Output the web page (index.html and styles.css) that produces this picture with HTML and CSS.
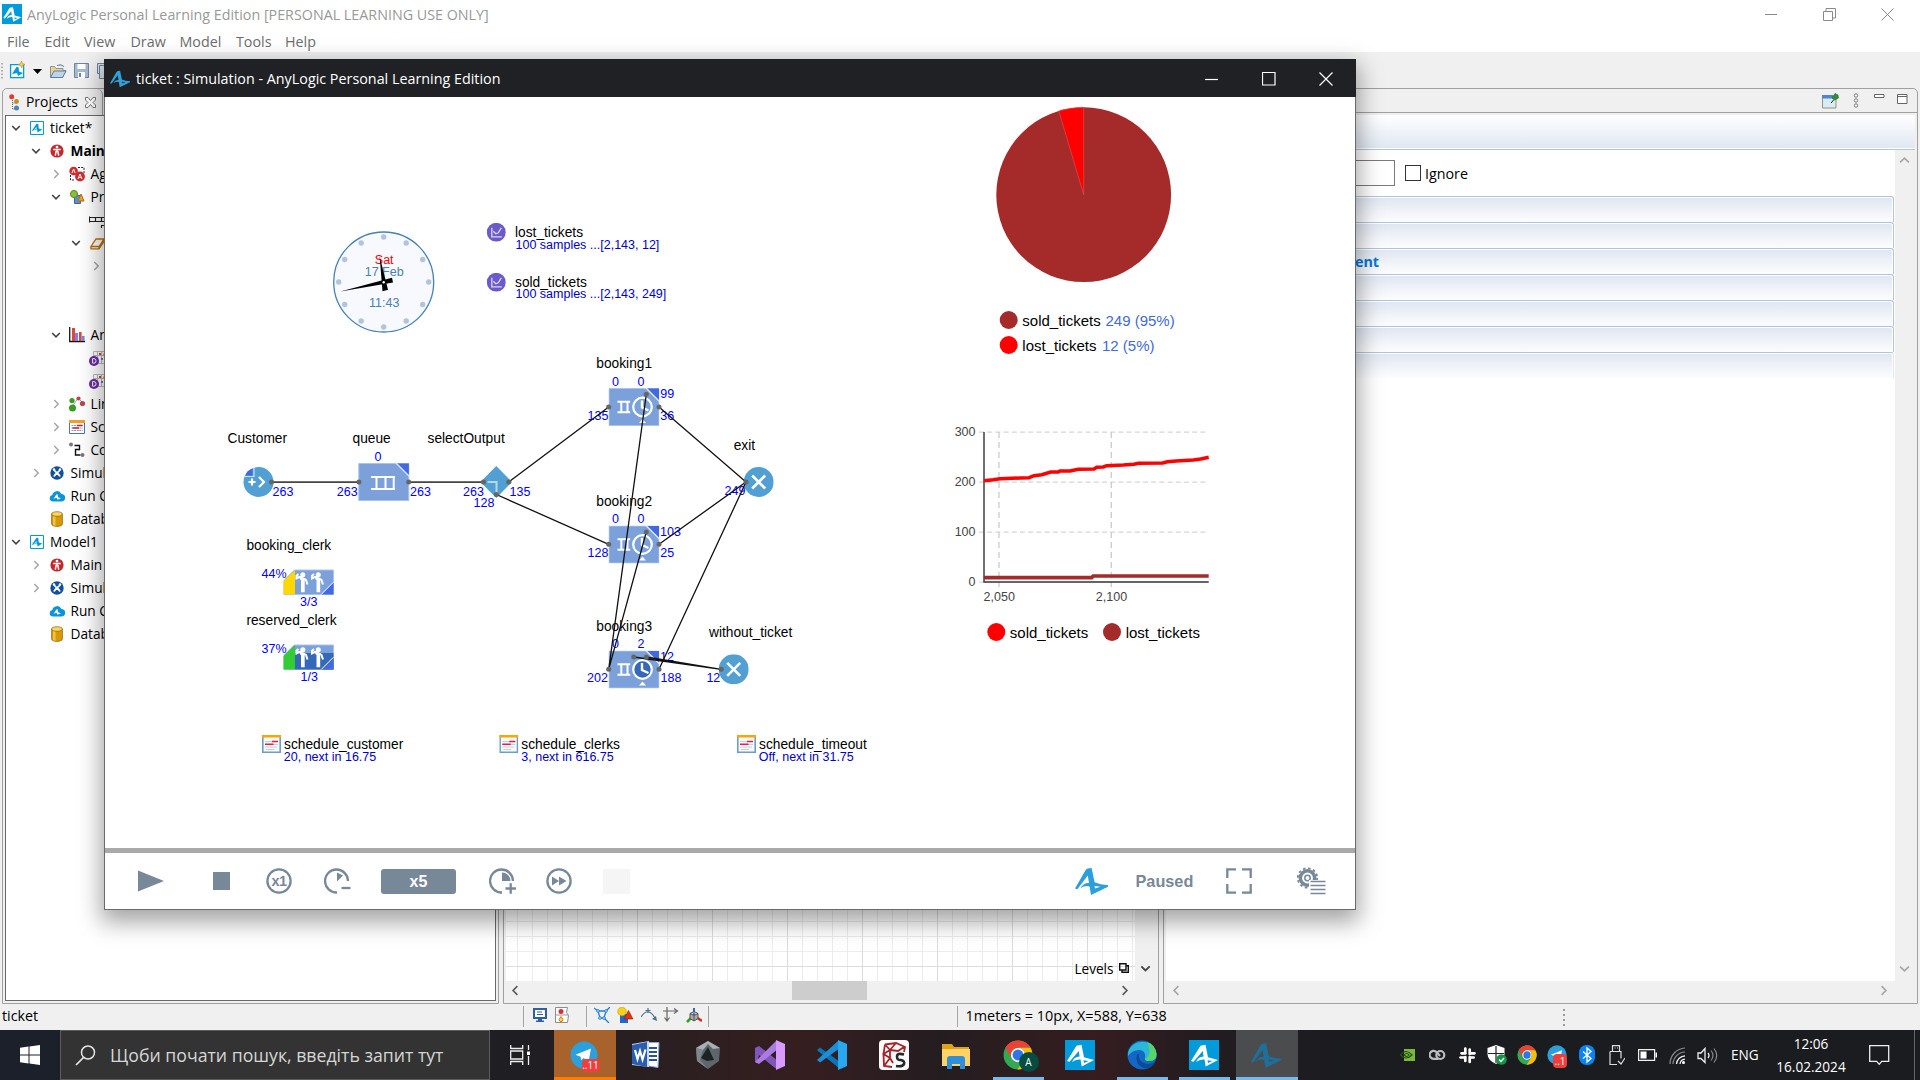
FILE: index.html
```html
<!DOCTYPE html>
<html lang="en">
<head>
<meta charset="utf-8">
<title>AnyLogic Personal Learning Edition</title>
<link rel="stylesheet" href="styles.css">
</head>
<body>
<svg class="symbols" aria-hidden="true">
  <symbol id="logo" viewBox="0 0 33 27"><path fill="currentColor" fill-rule="evenodd" d="M0 20.5 10.5 2.2Q12 0 16.6 0L19.6 14.2Q25 16.5 33 17.2L33 18.8 16 27 14.6 18.6Q9 16.6 5.4 20.6 7.6 15 14 15L12.8 7.4 2.4 21.2ZM19.600 18 20 20.500 25.500 18.800Z"/></symbol>
  <symbol id="model" viewBox="0 0 14 14"><path fill="#fff" stroke="#009bdb" d="M.5.5h13v13H.5z"/><path fill="#009bdb" d="M2 9.6 6.3 3 8.2 2.8 8.8 7.6 12.3 8.6 7.6 11.6 7 8.6Q5 8.400 4 10 4.600 7.700 6.700 7.500L6.500 6 3 10Z"/></symbol>
  <symbol id="down" viewBox="0 0 10 10"><path d="M1.200 3 5 6.800 8.800 3" fill="none" stroke="#444" stroke-width="1.600"/></symbol>
  <symbol id="right" viewBox="0 0 10 10"><path d="M3.300 1 7.200 5 3.300 9" fill="none" stroke="#a6a6a6" stroke-width="1.500"/></symbol>
  <symbol id="agent" viewBox="0 0 16 16"><circle cx="8" cy="8" r="6.600" fill="#c4282d"/><circle cx="8" cy="4.100" r="1.400" fill="#fff"/><path d="M4.200 6.400h7.600M8 6v3M7.200 8 6.300 12.600M8.800 8l.900 4.600" stroke="#fff" stroke-width="1.500" fill="none"/></symbol>
  <symbol id="agents" viewBox="0 0 16 16"><path d="M9 1.500h6v6M1.500 9v5h4" stroke="#222" stroke-dasharray="2 1.200" fill="none"/><circle cx="4.600" cy="5" r="4.300" fill="#d22b2f"/><circle cx="11" cy="10.500" r="4.900" fill="#d22b2f"/><path d="M3 7 4.600 3 6.200 7M9 13l2-5 2 5M9.800 11.500h2.400" stroke="#fff" fill="none"/></symbol>
  <symbol id="shapes" viewBox="0 0 16 16"><path fill="#5d90cc" stroke="#3867a5" d="M5.500 6.500h6v8h-6z"/><circle cx="5" cy="5" r="3.600" fill="#8dbb35" stroke="#5d8d20"/><path fill="#f2a128" stroke="#b76d0b" d="M12 5l3 7H9z"/></symbol>
  <symbol id="flow" viewBox="0 0 16 16"><path d="M.5 4.500v6M.5 5.500h16M.5 9.500h16M6.500 5v5M12.500 5v5M12 13.500h5M12.500 13v3" stroke="#222" stroke-width="1.200" fill="none"/></symbol>
  <symbol id="eraser" viewBox="0 0 16 16"><path d="M2 11.500 7 4h8l-5 7.500zM2 11.500v2.300h8L15 6.500V4M10 11.500v2" fill="#fff6e6" stroke="#b6700c" stroke-width="1.300"/></symbol>
  <symbol id="bars" viewBox="0 0 16 16"><path d="M.700 0v14.500H16" stroke="#151515" stroke-width="1.300" fill="none"/><path fill="#e0463a" d="M3 1h3v13H3zM10 5h2.600v9H10z"/><path fill="#7986e8" d="M6 6h3v8H6zM12.600 9h3v5h-3z"/></symbol>
  <symbol id="dataset" viewBox="0 0 16 16"><path d="M4.500 1.500h12v12h-12zM8.500 1.500v12M12.500 1.500v12M4.500 5.500h12" stroke="#bbb" fill="#fff"/><path fill="#e33" d="M10 3h2v2h-2z"/><path fill="#e8a12c" d="M14 3.500h2v2h-2z"/><path fill="#5772d8" d="M12 8h2v2h-2z"/><circle cx="5" cy="11" r="5" fill="#6a2aa8"/><path d="M3.600 8.600h1.200a2.200 2.200 0 0 1 0 4.600H3.600z" fill="none" stroke="#fff"/></symbol>
  <symbol id="links" viewBox="0 0 16 16"><path d="M3 11 9 2 14 7" stroke="#8fa5c7" fill="none"/><circle cx="3" cy="4.500" r="2.600" fill="#3a9a22"/><circle cx="3.500" cy="12" r="3.500" fill="#3a9a22"/><circle cx="9.500" cy="2.500" r="2.100" fill="#c0434a"/><circle cx="13.500" cy="7.500" r="2.600" fill="#c0434a"/></symbol>
  <symbol id="sched" viewBox="0 0 16 14"><path fill="#fff" stroke="#4a78ad" d="M.5.5h15v13H.5z"/><path fill="#f3a02a" d="M0 0h16v3H0z"/><path d="M2.500 5.500h11M2.500 8h11M2.500 10.500h11" stroke="#7f9fc8" stroke-dasharray="2 .600"/><path d="M8 5.500h5.500M3.500 8H10" stroke="#d0212b" stroke-width="1.300"/></symbol>
  <symbol id="conn" viewBox="0 0 16 16"><path d="M5.500 3.500h5v4h-4v5.500h5" fill="none" stroke="#111" stroke-width="1.400"/><circle cx="2" cy="2.500" r="2" fill="#777"/><circle cx="13.500" cy="13" r="2" fill="#777"/></symbol>
  <symbol id="sim" viewBox="0 0 16 16"><circle cx="8" cy="8" r="6.700" fill="#14509b"/><circle cx="5" cy="4.500" r="1.200" fill="#fff"/><circle cx="11" cy="4.500" r="1.200" fill="#fff"/><path d="M5 4.500c1 3 5 4 6 7M11 4.500c-1 3-5 4-6 7" stroke="#fff" stroke-width="1.800" fill="none"/></symbol>
  <symbol id="cloud" viewBox="0 0 16 12"><path fill="#0b94d6" d="M3.500 11.500A3.300 3.300 0 0 1 3.300 5 4.800 4.800 0 0 1 12.400 4 3.700 3.700 0 0 1 12.300 11.500Z"/><path fill="#fff" d="M4.500 9 7.300 4.500 8.600 4.300 9 7.200 12 8.200 8.400 9.800 7.800 8Q6.300 7.500 4.500 9Z"/></symbol>
  <symbol id="db" viewBox="0 0 12 16"><path fill="#d69a08" stroke="#8e6300" stroke-width=".700" d="M.6 3v10c0 1.300 2.300 2.400 5.400 2.400s5.400-1.100 5.400-2.400V3z"/><path fill="#f3c443" d="M2 4h2.500v11L2 14z"/><ellipse cx="6" cy="3" rx="5.400" ry="2.300" fill="#f9d564" stroke="#8e6300" stroke-width=".700"/></symbol>
  <symbol id="chrome" viewBox="0 0 28 28"><circle cx="14" cy="14" r="13.500" fill="#34a853"/><path fill="#ea4335" d="M2.300 7.200A13.500 13.500 0 0 1 25.700 7.300H14A6.800 6.800 0 0 0 8 17Z"/><path fill="#fbbc04" d="M25.700 7.300A13.500 13.500 0 0 1 13.500 27.500L19.900 17.400A6.800 6.800 0 0 0 18 8.600L14 7.300Z"/><circle cx="14" cy="14" r="6.600" fill="#fff"/><circle cx="14" cy="14" r="5.100" fill="#2f74e8"/></symbol>
  <symbol id="telegram" viewBox="0 0 28 28"><circle cx="14" cy="14" r="13.500" fill="#2ba0dc"/><path fill="#fff" d="M5.500 13.700 21 7.500 18.600 20.500 13.600 17 11.300 19.300 10.600 15.700Z"/></symbol>
  <symbol id="tile" viewBox="0 0 30 30"><path fill="#009bdb" d="M0 0h30v30H0z"/><path fill="#fff" fill-rule="evenodd" d="M2 21 11.500 5.800 16.500 4.800 19 17.300 29 20 16.700 26.500 15.500 19.500Q10.500 19 7 22 9 16.800 14.600 16.500L13.800 11 4.500 21.700ZM18.600 20.300 19 23 23.500 20.900Z"/></symbol>
  <symbol id="clerks" viewBox="0 0 51 25.500">
    <g fill="none" stroke="#fff" stroke-width="2"><path d="M18.500 7.500h-2.300l-2.700 1.400V6.200l2-1.700M17 9.500l2.500-1 3.500 2 1.500 4.500"/><path d="M34 7.500h-2.300L29 8.900V6.200l2-1.700M32.500 9.500l2.500-1 3.500 2L40 15"/></g>
    <path fill="#fff" d="M18 8.500h3.700v14.200H18zM33.500 8.500h3.700v14.200h-3.700z"/><circle cx="19.800" cy="5.300" r="2.500" fill="#fff"/><circle cx="35.300" cy="5.300" r="2.500" fill="#fff"/>
    <path fill="#4169e1" d="M50.500 12.700v12.300H38.500z"/><path d="M38.200 25 50.500 12.700" stroke="#fff"/>
  </symbol>
  <symbol id="service" viewBox="0 0 51 38">
    <path fill="#7ba0da" stroke="#a9c2ee" d="M.5.5h50v37H.5z"/><path fill="#4169e1" d="M38 .5h12.500V13z"/><path d="M37.500 0 51 13.500" stroke="#e8effc" stroke-width="1.300"/>
    <path d="M9 13.700h12.700M9 24.300h12.700M12.800 13v12M19 13v12" stroke="#fff" stroke-width="2" fill="none"/>
    <circle cx="34" cy="19" r="9.300" fill="var(--face)" stroke="#fff" stroke-width="2.200"/><path d="M33.500 12.500V19.500L40 22.500" stroke="#fff" stroke-width="2.400" fill="none"/><path fill="#fff" d="M30.500 35 34 31l3.500 4z"/>
  </symbol>
  <symbol id="sink" viewBox="-15 -15 30 30"><circle r="15" fill="#529fd4"/><path d="M-6.500-6.500 6.500 6.500M6.500-6.500-6.500 6.500" stroke="#fff" stroke-width="2.600"/></symbol>
  <symbol id="schedule" viewBox="0 0 19 18"><path fill="#f7f9fc" stroke="#6d9fc6" stroke-width="1.600" d="M.8.8h17.400v16.400H.8z"/><path fill="#ffa500" d="M0 0h19v2.500H0z"/><path d="M3 6.500h13M3 9.500h13M3 12h12M4 14.500h8" stroke="#c5cfdf" stroke-width="1.200"/><path d="M10 6.500h6M3 9.300h8.500" stroke="#dc2346" stroke-width="1.400"/></symbol>
  <symbol id="plotdata" viewBox="0 0 19 19"><circle cx="9.500" cy="9.500" r="9.500" fill="#6a5acd"/><path d="M5 5v9h10M6.500 8.500 9 11l2.500-1L14.500 5" stroke="#dcd8f6" stroke-width="1.300" fill="none"/></symbol>
</svg>

<div class="desktop">
  <header class="ide-title">
    <svg class="i20" viewBox="0 0 30 30"><use href="#tile"/></svg>
    <span class="ide-name">AnyLogic Personal Learning Edition [PERSONAL LEARNING USE ONLY]</span>
    <div class="win-buttons">
      <svg width="13" height="13"><path d="M0 6.500h12"/></svg>
      <svg width="13" height="13"><path d="M.5 3.500h9v9h-9zM3 3V.5h9.500V10H10"/></svg>
      <svg width="13" height="13"><path d="M.5.5l12 12M12.500.5l-12 12"/></svg>
    </div>
  </header>
  <nav class="menu"><span class="m-file">File</span><span class="m-edit">Edit</span><span class="m-view">View</span><span class="m-draw">Draw</span><span class="m-model">Model</span><span class="m-tools">Tools</span><span>Help</span></nav>
  <div class="toolbar">
    <svg width="110" height="20">
      <path d="M2 2v16" stroke="#999" stroke-width="1.500" stroke-dasharray="1.500 2"/>
      <path fill="#fff" stroke="#009bdb" stroke-width="1.300" d="M10.600 3.600h13v13h-13z"/><path fill="#009bdb" d="M12 13 16.500 6 18.500 6 19 10.500 23 12 18 15 17 12 15 12.500Z"/><path fill="#f5cf4c" stroke="#a58121" stroke-width=".500" d="M21.500 0l1 2.500L25 3.500 22.500 4.500 21.500 7 20.500 4.500 18 3.500 20.500 2.500z"/>
      <path d="M33 8h9l-4.500 5z"/>
      <path fill="#f3d27c" stroke="#7f94aa" d="M50.500 16.500v-11h4l1.500 2h7v2h3l-3.500 7z"/><path fill="#bfd4ea" stroke="#5b7fa3" d="M50.500 16.500 54 10h12l-3.500 6.500zM57 4.500q4-2 7 1"/>
      <path fill="#a5bad3" stroke="#6d84a2" d="M74.500 2.500h14v14h-14z"/><path fill="#fff" d="M77.500 3h8v5h-8zM78 11h7v6h-7z"/><path fill="#6d84a2" d="M79 12h2v4h-2z"/>
      <path fill="#d8e0ea" stroke="#6d84a2" d="M97.500 2.500h10v10h-10z"/><path fill="#d8e0ea" stroke="#6d84a2" d="M99.500 4.500h10v13h-10z"/>
    </svg>
  </div>

  <main class="workbench">
    <section class="panel projects">
      <div class="tabs"><div class="tab">
        <svg width="12" height="17"><path d="M3.500 4v11h3M3.500 9h3" stroke="#667" stroke-dasharray="1 1" fill="none"/><circle cx="2.700" cy="2.700" r="2.500" fill="#de3b35"/><circle cx="7.500" cy="7.500" r="2.400" fill="#c58b24"/><circle cx="7.500" cy="14" r="2.500" fill="#4a86b8"/></svg>
        <span>Projects</span>
        <svg width="11" height="11"><path d="M.5.500h2.500l2.500 3 2.500-3h2.500v2.500l-2.500 2.500 2.500 2.500v2.500H8L5.500 7.500 3 10.500H.5V8L3 5.500.5 3z" fill="#fff" stroke="#666" stroke-width=".900"/></svg>
      </div></div>
      <div class="tree">
        <div class="row l0"><svg class="tw"><use href="#down"/></svg><svg class="ic14"><use href="#model"/></svg><span>ticket*</span></div>
        <div class="row l1"><svg class="tw"><use href="#down"/></svg><svg class="ic"><use href="#agent"/></svg><b>Main</b></div>
        <div class="row l2"><svg class="tw"><use href="#right"/></svg><svg class="ic"><use href="#agents"/></svg><span>Ag</span></div>
        <div class="row l2"><svg class="tw"><use href="#down"/></svg><svg class="ic"><use href="#shapes"/></svg><span>Pro</span></div>
        <div class="row l3"><i class="tw"></i><svg class="ic"><use href="#flow"/></svg></div>
        <div class="row l3"><svg class="tw"><use href="#down"/></svg><svg class="ic"><use href="#eraser"/></svg></div>
        <div class="row l4"><svg class="tw"><use href="#right"/></svg></div>
        <div class="row"></div><div class="row"></div>
        <div class="row l2"><svg class="tw"><use href="#down"/></svg><svg class="ic"><use href="#bars"/></svg><span>An</span></div>
        <div class="row l3"><i class="tw"></i><svg class="ic"><use href="#dataset"/></svg></div>
        <div class="row l3"><i class="tw"></i><svg class="ic"><use href="#dataset"/></svg></div>
        <div class="row l2"><svg class="tw"><use href="#right"/></svg><svg class="ic"><use href="#links"/></svg><span>Lin</span></div>
        <div class="row l2"><svg class="tw"><use href="#right"/></svg><svg class="ic"><use href="#sched"/></svg><span>Sc</span></div>
        <div class="row l2"><svg class="tw"><use href="#right"/></svg><svg class="ic"><use href="#conn"/></svg><span>Co</span></div>
        <div class="row l1"><svg class="tw"><use href="#right"/></svg><svg class="ic"><use href="#sim"/></svg><span>Simul</span></div>
        <div class="row l1"><i class="tw"></i><svg class="ic"><use href="#cloud"/></svg><span>Run C</span></div>
        <div class="row l1"><i class="tw"></i><svg class="ic"><use href="#db"/></svg><span>Datab</span></div>
        <div class="row l0"><svg class="tw"><use href="#down"/></svg><svg class="ic14"><use href="#model"/></svg><span>Model1</span></div>
        <div class="row l1"><svg class="tw"><use href="#right"/></svg><svg class="ic"><use href="#agent"/></svg><span>Main</span></div>
        <div class="row l1"><svg class="tw"><use href="#right"/></svg><svg class="ic"><use href="#sim"/></svg><span>Simul</span></div>
        <div class="row l1"><i class="tw"></i><svg class="ic"><use href="#cloud"/></svg><span>Run C</span></div>
        <div class="row l1"><i class="tw"></i><svg class="ic"><use href="#db"/></svg><span>Datab</span></div>
      </div>
    </section>

    <section class="panel editor">
      <div class="editor-grid"><div class="levels"><span>Levels</span><svg width="10" height="10"><path d="M.7.700h6.300v6.300H.700zM7.500 2.700h1.800v6.500H3V7.500" fill="none" stroke="#111" stroke-width="1.400"/></svg></div></div>
      <div class="vscroll"><svg class="chev"><use href="#down"/></svg></div>
      <div class="hscroll"><svg class="chev flip dark"><use href="#right"/></svg><div class="thumb"></div><svg class="chev dark"><use href="#right"/></svg></div>
    </section>

    <section class="panel props">
      <div class="props-tabs">
        <svg width="17" height="16"><path fill="#d7ecf9" stroke="#9c8f6a" d="M.5 3.500h13.500v11.500H.5z"/><path fill="#4e88cc" d="M0 2h11v3.500H0z"/><path d="M9 10l3-3.500" stroke="#222"/><path fill="#2e9235" stroke="#1c6422" stroke-width=".600" d="M10 5l3-4.500L16 2l.5 3-4 2z"/></svg>
        <svg width="6" height="16" class="g1"><g fill="#fff" stroke="#777"><circle cx="3" cy="2.500" r="1.700"/><circle cx="3" cy="7.500" r="1.700"/><circle cx="3" cy="12.500" r="1.700"/></g></svg>
        <svg width="11" height="16" class="g2"><path fill="#fff" stroke="#666" d="M.5 1.500h9.500v3H.5z"/></svg>
        <svg width="11" height="16" class="g3"><path fill="#fff" stroke="#666" d="M.5 1.500h9.500v9H.5zM.5 3.500h9.500"/></svg>
      </div>
      <div class="props-head"></div>
      <div class="props-body">
        <div class="sheet">
          <div class="name-row"><div class="field"></div><div class="check"></div><span>Ignore</span></div>
          <div class="section"></div><div class="section"></div><div class="section"><b>ent</b></div><div class="section"></div><div class="section"></div><div class="section"></div><div class="section last"></div>
        </div>
        <div class="vbar"><svg class="chev up"><use href="#right"/></svg><svg class="chev dn"><use href="#right"/></svg></div>
      </div>
      <div class="hbar"><svg class="chev flip"><use href="#right"/></svg><svg class="chev"><use href="#right"/></svg></div>
    </section>
  </main>

  <footer class="status">
    <span class="s-name">ticket</span>
    <div class="s-group s-a">
      <svg width="14" height="16"><path fill="#2d5fa8" d="M0 1h14v11H0z"/><path fill="#fff" d="M2 3h10v7H2z"/><path d="M4 5h5M4 7.500h6" stroke="#2d5fa8"/><path fill="#2d5fa8" d="M5 12h4v1.500H5zM3 13.500h8V15H3z"/></svg>
      <svg width="15" height="16"><path fill="#fff" stroke="#8c8c8c" d="M.5.500h12l-1 5 2 3-1 7H.5z"/><path d="M.5 8h13" stroke="#999"/><circle cx="6" cy="4.500" r="2.500" fill="#d6303a"/><path d="M6 9.500l2 3-1 2H5l-1-2z" fill="#ffd35c" stroke="#d87911"/></svg>
    </div>
    <div class="s-group s-b">
      <svg width="16" height="16"><path d="M0 1l4 3h8l4-4M4 4l2 7h4l2-7M10 11l5 5" fill="none" stroke="#1a7fdc" stroke-width="1.300"/><g fill="#fff" stroke="#1a7fdc"><circle cx="4" cy="4" r="1.300"/><circle cx="12" cy="4" r="1.300"/><circle cx="6" cy="11" r="1.300"/><circle cx="10" cy="11" r="1.300"/></g></svg>
      <svg width="17" height="16"><path fill="#2266d4" d="M3 7h8v9H3z"/><circle cx="5" cy="4.500" r="4.300" fill="#f7d410" stroke="#c79b00" stroke-width=".600"/><path fill="#e0330f" stroke="#9d1c00" stroke-width=".600" d="M11.500 3.500 16 12H7z"/></svg>
      <svg width="16" height="16"><path d="M0 10Q7-1 14 11M7 1v5M4.500 3.500h5" fill="none" stroke="#4a7290" stroke-width="1.200"/><path fill="#4a7290" d="M16 14l-5-2 4-3z"/></svg>
      <svg width="16" height="16"><path d="M0 4h14M4 0v14M11 1.500 14.500 4 11 6.500M1.500 10.500 4 14l2.500-3.500" fill="none" stroke="#666" stroke-width="1.200"/></svg>
      <svg width="16" height="16"><path d="M8 8V1" stroke="#2a62e0" stroke-width="2"/><path d="M6 10l-5 5" stroke="#3a9a22" stroke-width="2.500"/><path d="M10 10l6 4" stroke="#d8261b" stroke-width="2.500"/><path fill="#aaa" stroke="#555" d="M8 4.500l4 2v5L8 14l-4-2.500v-5zM4 6.500l4 2 4-2M8 8.500V14"/></svg>
    </div>
    <div class="s-group s-c"></div>
    <span class="s-pos">1meters = 10px, X=588, Y=638</span>
    <div class="s-grip"></div>
  </footer>

  <footer class="taskbar">
    <div class="start"><svg width="20" height="20"><path fill="#fff" d="M0 2.800 8.500 1.600V9.500H0zM9.500 1.500 20 0V9.500H9.500zM0 10.500H8.500V18.400L0 17.200zM9.500 10.500H20V20L9.500 18.500z"/></svg></div>
    <div class="search"><svg width="21" height="21"><circle cx="13" cy="7.500" r="6.500" fill="none" stroke="#e6e6e6" stroke-width="1.500"/><path d="M8.500 12.500 1 20" stroke="#e6e6e6" stroke-width="1.700"/></svg><span>Щоби почати пошук, введіть запит тут</span></div>
    <div class="taskview"><svg width="20" height="20"><path d="M.700 0v3.500h12V0M.700 20v-3.500h12V20M.700 6h12v8h-12zM18.500 0v5M18.500 11v9" fill="none" stroke="#eee" stroke-width="1.300"/><path fill="#fff" d="M17 6.500h3v3.500h-3z"/></svg></div>
    <div class="app attention"><svg class="i28"><use href="#telegram"/></svg><span class="badge">..11</span></div>
    <div class="app"><svg width="30" height="30"><path fill="#fff" stroke="#88a7d6" d="M12 2.500h16l-1 25-12-2z"/><path d="M18 8h8M18 12h8M18 16h8M18 20h8" stroke="#29529c" stroke-width="2"/><path fill="#c9d8f0" d="M1 4l17-3v26L1 25z"/><path fill="#2a5caf" d="M1 5l15-3v25L1 24z"/><path d="M4 10l2.500 9L9 11l2.500 8.500L14.500 9.500" fill="none" stroke="#fff" stroke-width="2.200"/></svg></div>
    <div class="app"><svg width="28" height="30"><path fill="#5c666b" d="M14 1 26 8 25 21 14 29 3 21 2 8z"/><path fill="#a8b0b3" d="M14 1 26 8 19 9 14 4 9 10 2 8z"/><path fill="#7e888c" d="M2 8l7 2-3 10 8 9-11-8z"/><path fill="#1d2224" d="M14 7l6 13-7 1-6-3z"/></svg></div>
    <div class="app"><svg width="30" height="30"><path fill="#8156bb" d="M0 8 4 6 23 21V29L20 28 4 15 2 23 0 22z"/><path fill="#ab7be4" d="M0 22 21 1 23 9 4 24z"/><path fill="#d79bff" d="M21 0 30 4V26L21 30z"/></svg></div>
    <div class="app"><svg width="30" height="30"><path fill="#0a76ba" d="M0 10 3 7.500 23 22V29L1 11z"/><path fill="#1c8fd8" d="M0 20 21 1 23 8 3 22.500z"/><path fill="#28a8f0" d="M21 0 30 4V26L21 30z"/></svg></div>
    <div class="app"><svg width="30" height="30"><rect width="30" height="30" rx="4" fill="#fafafa"/><path d="M6 4.500 17 3l9 4-1 5M6 4.500 4.500 14 5 26l8 1M6 4.500 11 10l6-7M11 10 4.500 14 11 18 5 26M11 10l8 1 6-4M11 10v8l3 5" fill="none" stroke="#a5272d" stroke-width="1.800"/><path d="M25 14.500q-7-2-7 2t4 3.500q4 1 3 4t-8 2" fill="none" stroke="#24282c" stroke-width="2.600"/></svg></div>
    <div class="app"><svg width="30" height="28"><path fill="#e1a21a" d="M1 3h10l2 3h15v6H1z"/><path fill="#fcd364" d="M1 8h28v17H1z"/><path fill="#2f8fdc" d="M6 28V18q0-3 3-3h12q3 0 3 3v10h-5v-5h-8v5z"/></svg></div>
    <div class="app running"><svg width="30" height="30"><use href="#chrome"/></svg><span class="avatar">A</span></div>
    <div class="app"><svg width="30" height="30"><use href="#tile"/></svg></div>
    <div class="app running"><svg width="30" height="30"><circle cx="15" cy="15" r="14.500" fill="#1268c4"/><path fill="#2ab7d9" d="M1 13A14.500 14.500 0 0 1 29.500 14Q30 21 22 21q-5 0-4-3 1-8-6-8-7 0-11 6z"/><path fill="#58d56a" d="M20 2a14 14 0 0 1 9.500 12Q30 21 22 21q-4 0-4-2 8-4 2-17z"/><path fill="#0b4c99" d="M10 14q-3 12 10 15 6-2 8-7-7 4-13 0-4-3-3-8z"/></svg></div>
    <div class="app running"><svg width="30" height="30"><use href="#tile"/></svg></div>
    <div class="app running active"><svg class="dim-logo"><use href="#logo"/></svg></div>
    <div class="tray">
      <div><svg width="15" height="12"><path fill="#76b93c" d="M4 0h11v12H4z"/><path d="M.500 6Q6-1 12 6 6 12 .500 6zM4 6q3-3 5 0-2 3-5 0z" fill="none" stroke="#2c4d14" stroke-width="1.200"/></svg></div>
      <div><svg width="17" height="12"><path d="M9.500 9.800H5A4 4 0 1 1 7.500 3L11 7" fill="none" stroke="#bdbdbd" stroke-width="2.200"/><circle cx="11.300" cy="6" r="4" fill="none" stroke="#bdbdbd" stroke-width="2.200"/></svg></div>
      <div><svg width="17" height="17"><path d="M6.300 1.500v5M10.700 2.500v4.500M6.300 10v4M10.700 10v5M1.500 10.500H6M11 6.300h4.500M2.500 6.300h4M10.700 10.500h4" stroke="#fff" stroke-width="2.700" stroke-linecap="round"/></svg></div>
      <div><svg width="20" height="20"><path fill="#fff" d="M9 0l8.500 3v6q0 6-8.500 10Q.500 15 .500 9V3z"/><path d="M9 1v17M1 8.500h16" stroke="#222" stroke-width="1.200"/><circle cx="14.500" cy="14.500" r="5.300" fill="#159447"/><path d="M12 14.500l2 2 3-3.500" stroke="#fff" fill="none" stroke-width="1.300"/></svg></div>
      <div><svg width="20" height="20"><use href="#chrome"/></svg></div>
      <div><svg width="20" height="20"><use href="#telegram"/></svg><span class="badge small">..1</span></div>
      <div><svg width="16" height="20"><rect width="16" height="20" rx="7.500" fill="#0a84f5"/><path d="M4 6.500l8 7-4 3.500V3l4 3.500-8 7" fill="none" stroke="#fff" stroke-width="1.300"/></svg></div>
      <div><svg width="16" height="21"><path d="M3.500 6V.700h7V6M1 6.500h11v7M1 6.500v13h7M5.500 3h1M8 3h1M9 16l3 3 4-6" fill="none" stroke="#ddd" stroke-width="1.200"/></svg></div>
      <div><svg width="19" height="12"><path d="M.600.600h16v10.800H.600z" fill="none" stroke="#eee" stroke-width="1.200"/><path fill="#fff" d="M2.500 2.500h6v7h-6zM17.500 3.500H19v5h-1.500z"/></svg></div>
      <div><svg width="17" height="17"><path d="M1 17A16 16 0 0 1 16 1M4 17A12.500 12.500 0 0 1 16 5" fill="none" stroke="#8a8a8a" stroke-width="1.200"/><path d="M7.500 17A9 9 0 0 1 16 8.800M11 17a5.500 5.500 0 0 1 5-4.800" fill="none" stroke="#eee" stroke-width="1.300"/><circle cx="14.500" cy="15.500" r="1.500" fill="#fff"/></svg></div>
      <div><svg width="21" height="17"><path d="M1 6h3l4-4.500v14L4 11.500H1zM11 6q2 2.500 0 5" fill="none" stroke="#eee" stroke-width="1.300"/><path d="M14 3.500q4 5 0 10M17 1.500q5.500 7 0 14" fill="none" stroke="#8a8a8a" stroke-width="1.200"/></svg></div>
    </div>
    <span class="lang">ENG</span>
    <div class="datetime"><span>12:06</span><span>16.02.2024</span></div>
    <div class="notify"><svg width="21" height="21"><path d="M.700.700h19v15.600h-7l-2.500 3-2.500-3h-7z" fill="none" stroke="#eee" stroke-width="1.300"/></svg></div>
    <div class="peek"></div>
  </footer>

  <section class="sim-window">
    <div class="sim-title">
      <svg width="20" height="18" class="sim-logo"><use href="#logo"/></svg>
      <span>ticket : Simulation - AnyLogic Personal Learning Edition</span>
      <div class="sim-buttons">
        <svg width="14" height="14"><path d="M0 7.500h13"/></svg>
        <svg width="14" height="14"><path d="M.5.500h12.500v12.500H.5z"/></svg>
        <svg width="14" height="14"><path d="M.5.500l13 13M13.500.500l-13 13"/></svg>
      </div>
    </div>
    <svg class="canvas" width="1250" height="751" viewBox="105 97 1250 751">
      <!-- model clock -->
      <circle cx="383.700" cy="282" r="50" fill="#f8f8ff" stroke="#4682b4" stroke-width="1.300"/>
      <g fill="#b0c4de"><circle cx="383.700" cy="237" r="2.700"/><circle cx="406.200" cy="243" r="2.700"/><circle cx="422.700" cy="259.500" r="2.700"/><circle cx="428.700" cy="282" r="2.700"/><circle cx="422.700" cy="304.500" r="2.700"/><circle cx="406.200" cy="321" r="2.700"/><circle cx="383.700" cy="327" r="2.700"/><circle cx="361.200" cy="321" r="2.700"/><circle cx="344.700" cy="304.500" r="2.700"/><circle cx="338.700" cy="282" r="2.700"/><circle cx="344.700" cy="259.500" r="2.700"/><circle cx="361.200" cy="243" r="2.700"/></g>
      <g class="num mid"><text x="384.200" y="264" fill="#f00">Sat</text><text x="384.200" y="276.300" fill="#4682b4">17 Feb</text><text x="384.200" y="307" fill="#4682b4">11:43</text></g>
      <path d="M340.300 291.500 392 277.800 393 282.600Z"/><path d="M379.600 256 388 289.800 382.500 291.300Z"/><circle cx="383.700" cy="282.300" r="1.200" fill="#fff"/>

      <!-- data sets -->
      <use href="#plotdata" x="486.800" y="222.800" width="19" height="19"/><use href="#plotdata" x="486.800" y="272.800" width="19" height="19"/>
      <g class="lbl"><text x="515" y="237">lost_tickets</text><text x="515" y="287">sold_tickets</text></g>
      <g class="val"><text x="515.500" y="249">100 samples ...[2,143, 12]</text><text x="515.500" y="298">100 samples ...[2,143, 249]</text></g>

      <!-- process blocks -->
      <circle cx="258.500" cy="482" r="15" fill="#529fd4"/><path fill="#4169e1" d="M245.500 475.500Q246.500 470.500 252.500 468.500V475.500z"/><path d="M244.500 476.500h9.500v-9" stroke="#cfe3f4" stroke-width="1.200" fill="none"/><path d="M248.500 482h7M252 478.500v7M259 477l5 5-5 5" stroke="#fff" stroke-width="2.200" fill="none"/>
      <path fill="#7ba0da" stroke="#a9c2ee" d="M358.800 463.500h50v37h-50z"/><path fill="#4169e1" d="M396.500 463.500H408.800V476z"/><path d="M396 463l13 13" stroke="#e8effc" stroke-width="1.300"/>
      <path d="M371 477h24M371 489h24M376.500 476v13M385.500 476v13M393.700 476v13" stroke="#fff" stroke-width="2" fill="none"/>
      <path fill="#529fd4" d="M496.300 466 512 482 496.300 498 480.500 482z"/><path d="M487.500 482h9v12" stroke="#b5d8ee" stroke-width="2" fill="none"/>
      <g class="idle"><use href="#service" x="608.500" y="388" width="51" height="38"/><use href="#service" x="608.500" y="525.500" width="51" height="38"/></g>
      <g class="busy"><use href="#service" x="608.500" y="650.500" width="51" height="38"/></g>
      <use href="#sink" x="743.700" y="467" width="30" height="30"/><use href="#sink" x="718.700" y="654.300" width="30" height="30"/>

      <!-- resource pools -->
      <path fill="#7ba0da" stroke="#a9c2ee" d="M284 570h49.500v24.500H284z"/><path fill="#fff" d="M283 569h12l-12 12z"/><path fill="#ffd700" d="M283.500 581 295 570v24.500h-11.500z"/><use href="#clerks" x="283" y="569.500" width="51" height="25.500"/>
      <path fill="#7ba0da" stroke="#a9c2ee" d="M284 645h49.500v24.500H284z"/><path fill="#3568b8" d="M295 653h38.500v16.500H295z"/><path fill="#fff" d="M283 644h12l-12 12z"/><path fill="#32cd32" d="M283.500 656 295 645v24.500h-11.500z"/><use href="#clerks" x="283" y="644.500" width="51" height="25.500"/>

      <g class="lbl">
        <text x="227.500" y="443">Customer</text><text x="352.500" y="443">queue</text><text x="427.500" y="443">selectOutput</text>
        <text x="596.300" y="368">booking1</text><text x="596.300" y="506">booking2</text><text x="596.300" y="631">booking3</text>
        <text x="733.700" y="450">exit</text><text x="709" y="637">without_ticket</text>
        <text x="246.400" y="550">booking_clerk</text><text x="246.400" y="625">reserved_clerk</text>
      </g>
      <g class="num" fill="#00f">
        <text x="374.600" y="461">0</text><text x="272.500" y="495.500">263</text><text x="336.800" y="495.500">263</text><text x="410" y="495.500">263</text><text x="463" y="495.500">263</text><text x="509.600" y="495.500">135</text><text x="473.500" y="507.200">128</text>
        <text x="612" y="385.500">0</text><text x="637.600" y="385.500">0</text><text x="587.600" y="420">135</text><text x="660.300" y="397.700">99</text><text x="660.300" y="420">36</text>
        <text x="612" y="523">0</text><text x="637.600" y="523">0</text><text x="587.600" y="557.200">128</text><text x="660" y="535.700">103</text><text x="660.300" y="557.200">25</text>
        <text x="612" y="648">0</text><text x="637.600" y="648">2</text><text x="587" y="682.200">202</text><text x="660" y="660.700">12</text><text x="660.600" y="682.200">188</text>
        <text x="724.500" y="495">249</text><text x="706.400" y="682.200">12</text>
        <text x="261.500" y="578">44%</text><text x="300" y="606">3/3</text><text x="261.500" y="653">37%</text><text x="300.500" y="681">1/3</text>
      </g>

      <!-- connectors -->
      <g stroke="#111" stroke-width="1.300" fill="none">
        <path d="M271.500 482.200H359M408.700 482.200H483.500" stroke="#444" stroke-width="1.800"/>
        <path d="M508.700 482 608.700 407M496.300 494.500 608.700 544.300M659 407 746 482M659 544.300 746 482 659 669.300M646.300 394.300 608.700 669.300M646.300 532 608.700 669.300M633.700 657 721.300 669.300M646.300 657 721.300 669.300"/>
      </g>
      <g fill="#666"><circle cx="271.500" cy="482" r="2.500"/><circle cx="358.900" cy="482" r="2.500"/><circle cx="408.700" cy="482" r="2.500"/><circle cx="483.500" cy="482" r="2.500"/><circle cx="508.700" cy="482" r="2.500"/><circle cx="496.300" cy="494.500" r="2.500"/><circle cx="608.700" cy="407" r="2.500"/><circle cx="659" cy="407" r="2.500"/><circle cx="646.300" cy="394.300" r="2.500"/><circle cx="608.700" cy="544.300" r="2.500"/><circle cx="659" cy="544.300" r="2.500"/><circle cx="646.300" cy="532" r="2.500"/><circle cx="608.700" cy="669.300" r="2.500"/><circle cx="659" cy="669.300" r="2.500"/><circle cx="633.700" cy="657" r="2.500"/><circle cx="646.300" cy="657" r="2.500"/><circle cx="746" cy="482" r="2.500"/><circle cx="721.300" cy="669.300" r="2.500"/></g>

      <!-- schedules -->
      <use href="#schedule" x="262" y="735" width="19" height="18"/><use href="#schedule" x="499.300" y="735" width="19" height="18"/><use href="#schedule" x="737" y="735" width="19" height="18"/>
      <g class="lbl"><text x="284" y="749">schedule_customer</text><text x="521.300" y="749">schedule_clerks</text><text x="759" y="749">schedule_timeout</text></g>
      <g class="val"><text x="283.800" y="761">20, next in 16.75</text><text x="521.300" y="761">3, next in 616.75</text><text x="758.800" y="761">Off, next in 31.75</text></g>

      <!-- ticket share -->
      <circle cx="1083.700" cy="194.700" r="87.400" fill="#a52a2a"/><path fill="#f00" stroke="#d66" stroke-width=".500" d="M1083.700 194.700 1058.800 110.900A87.400 87.400 0 0 1 1083.700 107.300Z"/>
      <circle cx="1008.700" cy="320" r="9" fill="#a52a2a"/><circle cx="1008.700" cy="345" r="9" fill="#f00"/>
      <g class="leg"><text x="1022.300" y="325.800">sold_tickets</text><text x="1022.300" y="351">lost_tickets</text><text x="1105.500" y="325.800" fill="#4169e1">249 (95%)</text><text x="1102" y="351" fill="#4169e1">12 (5%)</text></g>

      <!-- ticket history -->
      <g stroke="#d6d6d6" stroke-width="1.300"><path d="M979 432.200H1208.700M979 482.200H1208.700M979 532.200H1208.700M979 582.200H984" stroke-dasharray="5 3.200"/><path d="M999 432V587M1111.300 432V587" stroke="#ccc" stroke-dasharray="6 4"/></g>
      <path d="M984 432V582H1208.700" fill="none" stroke="#333" stroke-width="1.400"/>
      <polyline fill="none" stroke="#f00" stroke-width="3.500" points="984,480.700 993.300,479.700 1000,478.700 1020,478 1029,477.700 1034,475.700 1041.700,474.700 1050.700,472 1058.300,472 1060,471 1070,471 1078.300,469.300 1094,469 1096.700,467.300 1103.300,467 1106.700,465.700 1123.300,465 1134,464.300 1138.300,463.300 1162.700,463 1167.300,461.700 1176,461 1193.300,460 1200.700,459 1208.700,457.300"/>
      <polyline fill="none" stroke="#a52a2a" stroke-width="3.700" points="984,577.600 1091.700,577.600 1093.300,576 1208.700,576"/>
      <g class="num" fill="#444"><g class="end"><text x="975.500" y="436">300</text><text x="975.500" y="486">200</text><text x="975.500" y="536">100</text><text x="975.500" y="586">0</text></g><g class="mid"><text x="999.200" y="601.300">2,050</text><text x="1111.500" y="601.300">2,100</text></g></g>
      <circle cx="996.300" cy="632" r="9" fill="#f00"/><circle cx="1112" cy="632" r="9" fill="#a52a2a"/>
      <g class="leg"><text x="1009.800" y="638">sold_tickets</text><text x="1125.700" y="638">lost_tickets</text></g>
    </svg>
    <div class="sim-controls">
      <svg class="c-play" width="27" height="22"><path d="M0 .500 26 11 0 21.500z"/></svg>
      <div class="stop"></div>
      <svg class="c-one" width="26" height="26"><circle cx="13" cy="13" r="11.600" class="ring"/><text x="13" y="18" class="x1">x1</text></svg>
      <svg class="c-slow" width="28" height="26"><path class="ring" d="M24 13A11.500 11.500 0 1 0 13 24.500"/><path d="M13 4.500 19 7.500 13 13.500z"/><path class="ring" d="M17.500 20h9"/></svg>
      <div class="speed">x5</div>
      <svg class="c-fast" width="28" height="26"><path class="ring" d="M24 13A11.500 11.500 0 1 0 13 24.500"/><path d="M13 4.500A8.500 8.500 0 0 1 21.500 13H13z"/><path class="ring" d="M16.500 20.500h10.500M21.700 15.200v10.600"/></svg>
      <svg class="c-ff" width="26" height="26"><circle cx="13" cy="13" r="11.600" class="ring"/><path d="M6 8.500 13 13 6 17.500zM13 8.500l7.500 4.500-7.500 4.500z"/></svg>
      <div class="blank"></div>
      <svg class="c-logo"><use href="#logo"/></svg>
      <span class="paused">Paused</span>
      <svg class="c-full" width="26" height="26"><path class="ring" d="M1.300 10V1.300H10M16 1.300h8.700V10M24.700 16v8.700H16M10 24.700H1.300V16"/></svg>
      <svg class="c-gear" width="30" height="28"><circle cx="10.500" cy="11" r="7.200" fill="none" stroke="#778899" stroke-width="3.500"/><circle cx="10.500" cy="11" r="9.700" fill="none" stroke="#778899" stroke-width="1.800" stroke-dasharray="2.600 2.500"/><circle cx="10.500" cy="11" r="2.700" fill="none" stroke="#778899" stroke-width="1.500"/><path fill="#fff" d="M12 13h17v15H12z"/><path d="M13.500 14.500H28.500M13.500 18.500H28.500M13.500 22.500H28.500M13.500 26.500H28.500" stroke="#778899" stroke-width="1.500"/></svg>
    </div>
  </section>
</div>
</body>
</html>
```
FILE: styles.css
```css
* { box-sizing: border-box; }
body { margin: 0; background: #f0f0f0; font: 14.3px/20px "Open Sans", "Noto Sans", sans-serif; color: #000; overflow: hidden; }
svg { display: block; flex: none; }
.symbols { position: absolute; width: 0; height: 0; }
.desktop { position: relative; width: 1920px; height: 1080px; display: flex; flex-direction: column; overflow: hidden; white-space: nowrap; }

/* IDE frame */
.ide-title { height: 30px; background: #fff; display: flex; align-items: center; padding: 0 26px 0 2px; color: #999; flex: none; }
.i20 { width: 20px; height: 20px; margin-top: -2px; }
.ide-name { margin-left: 5px; }
.win-buttons { margin-left: auto; display: flex; gap: 45px; fill: none; stroke: #8a8a8a; margin-top: -1px; }
.menu { height: 22px; background: #fff; display: flex; padding-left: 7px; color: #6d6d6d; line-height: 23px; flex: none; }
.m-file { width: 37.5px; } .m-edit { width: 39.5px; } .m-view { width: 46.500px; } .m-draw { width: 49px; } .m-model { width: 56.500px; } .m-tools { width: 49px; }
.toolbar { height: 36px; padding-top: 9px; flex: none; }
.workbench { height: 916px; display: grid; grid-template-columns: 497px 656px 755px; column-gap: 4px; padding-left: 2px; flex: none; }
.panel { border: 1px solid #a0a0a0; border-radius: 5px 5px 0 0; background: #f0f0f0; min-width: 0; }

/* project tree */
.projects { display: flex; flex-direction: column; padding: 0 2px 2px; }
.tabs { height: 26px; display: flex; }
.tab { width: 98px; display: flex; align-items: center; padding: 0 0 0 4px; gap: 5px; font-size: 13.900px; border-right: 1px solid #a0a0a0; border-radius: 0 6px 0 0; }
.tab svg:first-child { width: 12px; }
.tab svg:last-child { margin-left: 2px; }
.tree { flex: 1; background: #fff; border: 1px solid #696969; font-size: 13.700px; }
.row { height: 23px; display: flex; align-items: center; padding-left: 5px; }
.l1 { padding-left: 25px; } .l2 { padding-left: 45px; } .l3 { padding-left: 65px; } .l4 { padding-left: 85px; }
.tw { width: 10px; height: 10px; margin-right: 7.500px; }
.ic, .ic14 { width: 16px; height: 16px; margin-right: 6px; }
.l0 .ic14 { width: 14px; height: 14px; margin: 0 6px 0 1.500px; }
.l1 .ic { margin-left: .5px; margin-right: 5.500px; }

/* graphical editor */
.editor { display: grid; grid-template: 1fr 22px / 630px 1fr; padding-left: 2px; }
.editor-grid { display: flex; align-items: flex-end; justify-content: flex-end; padding: 0 6.500px 2px 0; margin-right: 1px; background-color: #fff;
  background-image: linear-gradient(90deg, #dcdcdc 1px, transparent 1px), linear-gradient(#dcdcdc 1px, transparent 1px), linear-gradient(90deg, #ececec 1px, transparent 1px), linear-gradient(#ececec 1px, transparent 1px);
  background-size: 75px 75px, 75px 75px, 15px 15px, 15px 15px; background-position: 56px 0, 0 52px, 11px 0, 0 7px; }
.levels { display: flex; gap: 5px; font-size: 13.600px; align-items: center; }
.levels svg { margin-top: -3px; }
.vscroll { display: flex; flex-direction: column-reverse; align-items: center; padding: 0 3px 7px 0; }
.chev { width: 11px; height: 11px; }
.flip { transform: scaleX(-1); }
.dark { filter: brightness(.55); }
.hscroll { display: flex; align-items: center; padding: 0 28px 3px 4px; grid-column: 1 / 3; }
.thumb { width: 75px; height: 19px; background: #cdcdcd; margin: 0 auto 0 271px; }

/* properties view */
.props { display: flex; flex-direction: column; padding: 0 2px 1px; border-radius: 0 5px 0 0; }
.props-tabs { height: 24px; margin: 0 -2px 2px; border-bottom: 1px solid #a0a0a0; display: flex; justify-content: flex-end; padding: 4px 9px 0 0; flex: none; }
.g1 { margin-left: 14px; } .g2 { margin-left: 15px; } .g3 { margin-left: 12px; }
.props-head { height: 35px; background: linear-gradient(#fff, #dfe7f1); border-bottom: 1px solid #b0c4de; box-shadow: inset 0 -1px #fff; flex: none; }
.props-body { flex: 1; display: flex; }
.sheet { flex: 1; background: #fff; padding-top: 10px; }
.name-row { display: flex; align-items: center; height: 26px; margin-bottom: 10px; }
.name-row span { padding-top: 1px; }
.field { width: 229px; height: 26px; border: 1px solid #7a7a7a; }
.check { width: 16px; height: 16px; border: 1px solid #333; margin: 0 4px 0 10px; }
.section { height: 26px; border: 1px solid #b0c4de; border-width: 1px 1px 0 0; border-radius: 0 3px 0 0; background: linear-gradient(#dfe6f1, #fdfdfe); box-shadow: inset -1px 1px #fff; margin-right: 1px; display: flex; align-items: center; padding-left: 189px; color: #0078d7; }
.section.last { border-right-color: #dfe6f1; }
.vbar { width: 20px; display: flex; flex-direction: column; justify-content: space-between; align-items: center; padding: 5px 1px 7px 0; }
.up { transform: rotate(-90deg); } .dn { transform: rotate(90deg); }
.hbar { height: 21px; display: flex; justify-content: space-between; align-items: center; padding: 0 26px 2px 5px; }

/* status line */
.status { height: 26px; display: flex; align-items: flex-start; padding: 2px 0 0 2px; flex: none; }
.s-name { width: 521px; }
.s-group { height: 21px; display: flex; border-left: 1px solid #a5a5a5; padding: 1px 0 0 9px; }
.s-a { width: 63px; gap: 8px; } .s-b { width: 122px; gap: 7px; padding-left: 7px; } .s-c { width: 248.500px; }
.s-b svg:nth-child(n+3) { margin-left: -.5px; }
.s-pos { border-left: 1px solid #a5a5a5; padding-left: 8px; height: 21px; width: 606px; font-size: 14.400px; }
.s-grip { width: 2px; height: 17px; margin-top: 3px; background: repeating-linear-gradient(#999 0 2px, transparent 2px 5px); }

/* taskbar */
.taskbar { height: 50px; flex: none; display: flex; align-items: stretch; color: #fff; font-size: 13.600px;
  background: linear-gradient(90deg, #1b202a 0, #1f1e23 27%, #2d1f20 36%, #351e20 42%, #241d20 49%, #351d20 57%, #221c20 63%, #1b1c20 70%, #1b1c20 100%); }
.start { width: 60px; display: flex; align-items: center; justify-content: center; }
.search { width: 430px; background: #333; border: 1px solid #5c5c5c; display: flex; align-items: center; padding-left: 14px; gap: 14px; font-size: 17.700px; color: #d6d6d6; }
.taskview { width: 63.500px; display: flex; align-items: center; padding-left: 20px; }
.app { width: 62px; display: flex; align-items: center; justify-content: center; position: relative; padding-right: 2px; }
.running::after { content: ""; position: absolute; left: 5px; right: 6px; bottom: 0; height: 3px; background: #76b9ed; }
.attention { background: #a8622b; border-bottom: 3px solid #ff7b00; padding-top: 3px; }
.active { background: #4b4c4e; }
.active::after { left: 0; right: 0; }
.i28 { width: 28px; height: 28px; }
.badge { position: absolute; left: 28px; top: 29px; width: 18px; height: 13px; border-radius: 4px; background: #f03e3c; font-size: 10px; line-height: 13px; text-align: center; }
.badge.small { left: 11px; top: 24px; width: 14px; height: 14px; line-height: 15px; }
.avatar { position: absolute; left: 31px; top: 22px; width: 20px; height: 20px; border-radius: 50%; background: #044d40; font-size: 10px; text-align: center; }
.dim-logo { width: 30px; height: 27px; color: #1f6f9b; }
.tray { display: flex; margin-left: 94.500px; }
.tray div { width: 30px; display: flex; align-items: center; justify-content: center; position: relative; }
.lang { margin-left: 9px; width: 45px; line-height: 50px; }
.datetime { width: 70px; display: flex; flex-direction: column; align-items: center; line-height: 23px; padding-top: 2px; margin-left: 0; }
.notify { margin-left: 23px; width: 45px; display: flex; align-items: center; }
.peek { border-left: 1px solid #666; }

/* simulation window floats above the IDE */
.sim-window { position: absolute; left: 104px; top: 59px; width: 1252px; height: 851px; border: 1px solid #6a6a6a; border-top: 0; background: #fff; display: flex; flex-direction: column; box-shadow: 0 9px 22px 3px rgba(0, 0, 0, .36); }
.sim-title { height: 38px; background: #202124; color: #fff; display: flex; align-items: center; padding: 1px 23px 0 6px; flex: none; margin: 0 -1px; }
.sim-title span { margin-left: 6px; font-size: 14.330px; padding-top: 1px; }
.sim-logo { color: #2ca2dc; }
.sim-buttons { margin-left: auto; display: flex; gap: 43px; fill: none; stroke: #fff; stroke-width: 1.200; }
.canvas { font-family: "Liberation Sans", Arial, sans-serif; }
.lbl { font-size: 13.750px; }
.num { font-size: 12.500px; }
.val { font-size: 12.500px; fill: #00c; }
.leg { font-size: 15px; }
.mid { text-anchor: middle; }
.end { text-anchor: end; }
.idle { --face: #7ba0da; }
.busy { --face: #3568b8; }
.sim-controls { height: 61px; border-top: 5px solid #a9a9a9; display: flex; align-items: center; padding-left: 33px; fill: #778899; color: #778899; font: bold 16.250px "Liberation Sans", Arial, sans-serif; }
.ring { fill: none; stroke: #778899; stroke-width: 2.300; }
.x1 { font-size: 14.500px; text-anchor: middle; letter-spacing: -.5px; }
.stop { width: 17px; height: 18px; background: #778899; margin-left: 48px; }
.c-one { margin-left: 36px; }
.c-slow { margin-left: 32px; }
.speed { width: 75px; height: 25px; border-radius: 3px; background: #778899; color: #fff; font-size: 16px; line-height: 25px; text-align: center; margin-left: 29px; }
.c-fast { margin-left: 33px; }
.c-ff { margin-left: 28.500px; }
.blank { width: 27px; height: 25px; background: #f5f5f5; margin-left: 31px; }
.c-logo { width: 33px; height: 27px; color: #2b9fdb; margin-left: 445px; }
.paused { margin-left: 28px; width: 62px; }
.c-full { margin-left: 28px; }
.c-gear { margin-left: 45px; }
```
